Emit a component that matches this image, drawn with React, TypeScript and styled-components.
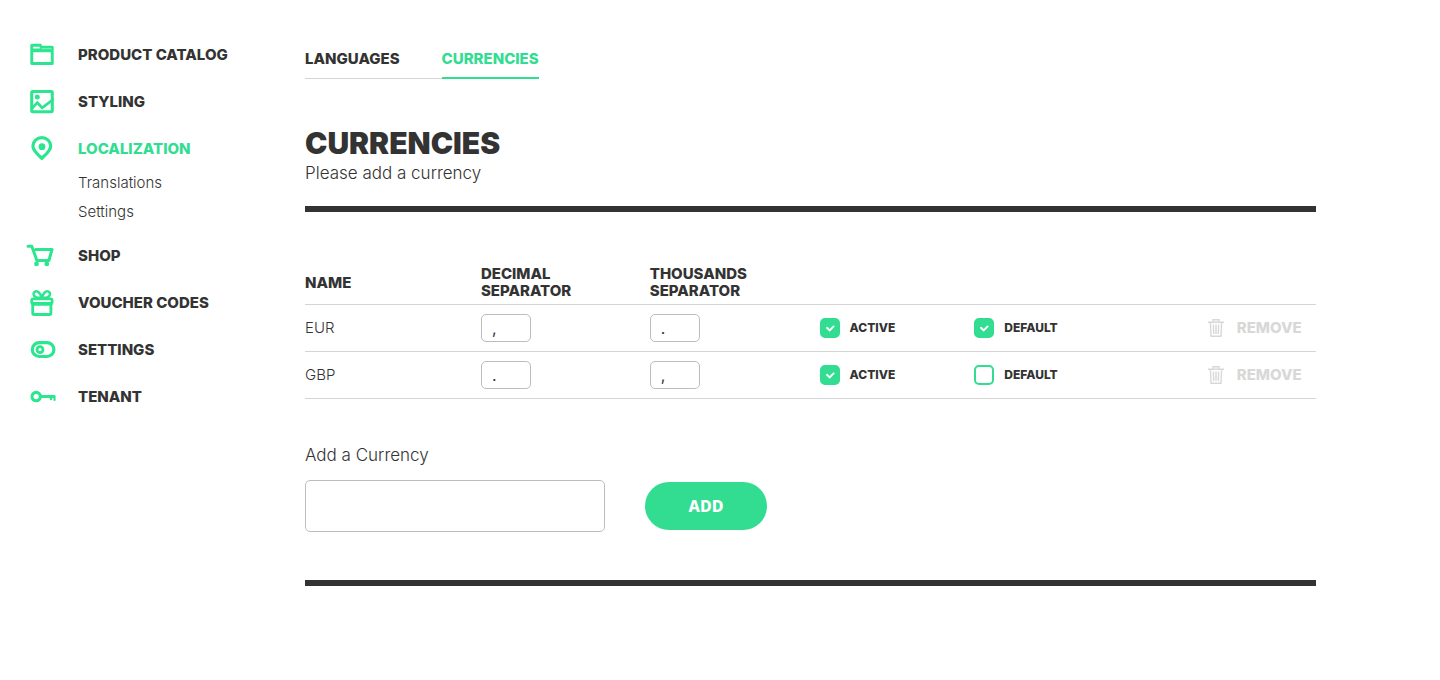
import React, { useState } from "react";
import styled, { createGlobalStyle, css } from "styled-components";

const color = {
  ink: "#333333",
  green: "#32dd92",
  icon: "#2ce68f",
  line: "#d5d5d5",
  field: "#bdbdbd",
  muted: "#d8d8d8",
};

const GlobalStyle = createGlobalStyle`
  * { box-sizing: border-box; }
  body {
    margin: 0;
    background: #fff;
    color: ${color.ink};
    font-family: Inter, "Liberation Sans", sans-serif;
    font-size: 15px;
  }
`;

const Page = styled.div`
  display: flex;
  align-items: flex-start;
`;

const Sidebar = styled.nav`
  flex: 0 0 305px;
  padding: 41px 20px 40px 26px;
`;

const Menu = styled.ul`
  display: flex;
  flex-direction: column;
  gap: 19px;
  margin: 0;
  padding: 0;
  list-style: none;
`;

const MenuLink = styled.a<{ $active?: boolean }>`
  display: flex;
  align-items: center;
  gap: 20px;
  height: 28px;
  color: ${(p) => (p.$active ? color.green : color.ink)};
  font-weight: 800;
  font-size: 15px;
  line-height: 20px;
  text-decoration: none;
  text-transform: uppercase;
  white-space: nowrap;
`;

const MenuIcon = styled.svg`
  flex: none;
  width: 32px;
  height: 28px;
  color: ${color.icon};
`;

const SubMenu = styled.ul`
  display: flex;
  flex-direction: column;
  gap: 9px;
  margin: 10px 0 0 52px;
  padding: 0 0 1px;
  list-style: none;
`;

const SubLink = styled.a`
  display: block;
  color: ${color.ink};
  font-weight: 300;
  font-size: 15px;
  line-height: 20px;
  text-decoration: none;
`;

const Main = styled.main`
  flex: 1;
  min-width: 0;
  margin-right: 124px;
  padding: 49px 0 60px;
`;

const Tabs = styled.nav`
  display: flex;
`;

const Tab = styled.a<{ $active?: boolean }>`
  padding: 0 42px 9px 0;
  border-bottom: 1px solid ${color.line};
  color: ${color.ink};
  font-weight: 800;
  font-size: 15px;
  line-height: 20px;
  text-decoration: none;
  text-transform: uppercase;
  ${(p) =>
    p.$active &&
    css`
      padding: 0 0 8px;
      border-bottom: 2px solid ${color.green};
      color: ${color.green};
    `}
`;

const Title = styled.h1`
  margin: 46px 0 0;
  font-weight: 900;
  font-size: 30px;
  line-height: 36px;
  text-transform: uppercase;
`;

const Intro = styled.p`
  margin: 0;
  font-weight: 300;
  font-size: 17px;
  line-height: 24px;
`;

const Rule = styled.hr<{ $space: number }>`
  height: 6px;
  margin: ${(p) => p.$space}px 0 0;
  border: 0;
  background: ${color.ink};
`;

const Table = styled.table`
  width: 100%;
  margin-top: 53px;
  border-spacing: 0;
  table-layout: fixed;
`;

const HeadCell = styled.th<{ $width: string }>`
  width: ${(p) => p.$width};
  padding: 0 0 5px;
  border-bottom: 1px solid ${color.line};
  font-weight: 800;
  font-size: 15px;
  line-height: 17px;
  text-align: left;
  text-transform: uppercase;
`;

const Cell = styled.td`
  height: 47px;
  padding: 0;
  border-bottom: 1px solid ${color.line};
  font-weight: 300;
  font-size: 15px;
  line-height: 20px;
`;

const SeparatorInput = styled.input`
  display: block;
  width: 50px;
  height: 28px;
  padding: 0 10px;
  border: 1px solid ${color.field};
  border-radius: 5px;
  background: #fff;
  color: ${color.ink};
  font: 400 16px Inter, sans-serif;
`;

const CheckLabel = styled.label`
  display: inline-flex;
  align-items: center;
  gap: 10px;
  font-weight: 800;
  font-size: 12px;
  text-transform: uppercase;
  vertical-align: middle;
`;

const CheckBox = styled.span`
  position: relative;
  display: block;
  width: 20px;
  height: 20px;
`;

const CheckInput = styled.input`
  display: block;
  width: 20px;
  height: 20px;
  margin: 0;
  appearance: none;
  border: 2px solid ${color.green};
  border-radius: 5px;
  &:checked {
    background: ${color.green};
  }
`;

const CheckMark = styled.svg`
  position: absolute;
  inset: 0;
  pointer-events: none;
`;

const RemoveButton = styled.button`
  display: flex;
  align-items: center;
  gap: 13px;
  padding: 0;
  border: 0;
  background: none;
  color: ${color.muted};
  font: 800 15px/20px Inter, sans-serif;
  text-transform: uppercase;
`;

const AddForm = styled.form`
  margin-top: 44px;
`;

const AddLabel = styled.label`
  display: block;
  font-weight: 300;
  font-size: 17px;
  line-height: 24px;
`;

const AddRow = styled.div`
  display: flex;
  align-items: center;
  gap: 40px;
  margin-top: 13px;
`;

const AddInput = styled.input`
  width: 300px;
  height: 52px;
  padding: 0 16px;
  border: 1px solid ${color.field};
  border-radius: 5px;
  background: #fff;
  color: ${color.ink};
  font: 400 16px Inter, sans-serif;
`;

const AddButton = styled.button`
  width: 122px;
  height: 48px;
  padding: 0;
  border: 0;
  border-radius: 24px;
  background: ${color.green};
  color: #fff;
  font: 800 16px "Noto Sans", sans-serif;
  text-transform: uppercase;
`;

const stroke = {
  fill: "none",
  stroke: "currentColor",
  strokeLinecap: "round" as const,
  strokeLinejoin: "round" as const,
};

const icons = {
  catalog: (
    <>
      <path
        fill="currentColor"
        fillRule="evenodd"
        d="M6 2.8h8.6a1.2 1.2 0 0 1 1.2 1.2v.8h10.4a1.5 1.5 0 0 1 1.5 1.5v16.2a1.6 1.6 0 0 1-1.6 1.6H6a1.7 1.7 0 0 1-1.7-1.7V4.5A1.7 1.7 0 0 1 6 2.8zM7.2 5.8v1.7h6.6V5.8zM7.2 11.2v9.9h17.6v-9.9z"
      />
      <path fill="#fff" fillOpacity=".35" d="M15.5 7h10v1.2h-10z" />
    </>
  ),
  styling: (
    <>
      <rect x="5.7" y="3.5" width="20.6" height="20.2" rx="1" {...stroke} strokeWidth="3" />
      <circle cx="11.3" cy="8.9" r="2.5" fill="currentColor" />
      <path d="M6 20.4l5.3-5.8 4.8 5.2L26.4 12" {...stroke} strokeWidth="2.8" />
    </>
  ),
  localization: (
    <>
      <path
        d="M15.8 23.3c-3-3-8.9-7.3-8.9-12.3a8.9 8.3 0 0 1 17.8 0c0 5-5.9 9.3-8.9 12.3z"
        {...stroke}
        strokeWidth="3.2"
      />
      <circle cx="16" cy="11.7" r="3.4" fill="currentColor" />
    </>
  ),
  shop: (
    <>
      <path d="M2 4.2h3.8l5.1 14.3h12L26 7.5H9.8" {...stroke} strokeWidth="3" />
      <circle cx="10.5" cy="21.9" r="2.4" fill="currentColor" />
      <circle cx="20.8" cy="21.9" r="2.4" fill="currentColor" />
    </>
  ),
  voucher: (
    <g {...stroke} strokeWidth="2.8">
      <rect x="5.7" y="9.8" width="20.4" height="4.6" rx="1.5" />
      <path d="M6.7 14.7v9.5a1.3 1.3 0 0 0 1.3 1.3h15.6a1.3 1.3 0 0 0 1.3-1.3v-9.5" />
      <path d="M7 15.3h18" />
      <path
        d="M15.8 8.6C11.5 9.6 8 8 7.6 5.2 7.4 3 9.6 1.7 11.6 2.6c2 1 3.3 3.4 4.2 6 .9-2.6 2.2-5 4.2-6 2-.9 4.2.4 4 2.6-.4 2.8-3.9 4.4-8.2 3.4z"
        strokeWidth="2.6"
      />
    </g>
  ),
  settings: (
    <>
      <rect x="6.3" y="6.6" width="21.6" height="13.9" rx="6.9" {...stroke} strokeWidth="3.2" />
      <circle cx="14" cy="13.6" r="3" {...stroke} strokeWidth="2.8" />
    </>
  ),
  tenant: (
    <>
      <circle cx="10.2" cy="13.6" r="4.2" {...stroke} strokeWidth="3.1" />
      <path
        fill="currentColor"
        d="M15 12h13.3a1.3 1.3 0 0 1 1.3 1.3V17a1.1 1.1 0 0 1-2.2 0v-2h-1.2v1a1.2 1.2 0 0 1-2.4 0v-1H15z"
      />
    </>
  ),
};

type IconName = keyof typeof icons;

const menu: { icon: IconName; label: string; children?: string[] }[] = [
  { icon: "catalog", label: "Product catalog" },
  { icon: "styling", label: "Styling" },
  { icon: "localization", label: "Localization", children: ["Translations", "Settings"] },
  { icon: "shop", label: "Shop" },
  { icon: "voucher", label: "Voucher codes" },
  { icon: "settings", label: "Settings" },
  { icon: "tenant", label: "Tenant" },
];

const currencies = [
  { name: "EUR", decimal: ",", thousands: ".", active: true, standard: true },
  { name: "GBP", decimal: ".", thousands: ",", active: true, standard: false },
];

const columns = [
  { label: "Name", width: "17.4%" },
  { label: <>Decimal<br />separator</>, width: "16.7%" },
  { label: <>Thousands<br />separator</>, width: "16.8%" },
  { label: "", width: "15.3%" },
  { label: "", width: "23.1%" },
  { label: "", width: "10.7%" },
];

function Check({ label, initial }: { label: string; initial: boolean }) {
  const [checked, setChecked] = useState(initial);
  return (
    <CheckLabel>
      <CheckBox>
        <CheckInput type="checkbox" checked={checked} onChange={(e) => setChecked(e.target.checked)} />
        {checked && (
          <CheckMark viewBox="0 0 20 20" aria-hidden="true">
            <path d="M7 9.8l2.7 2.6 3.9-4" fill="none" stroke="#fff" strokeWidth="1.9" strokeLinecap="round" />
          </CheckMark>
        )}
      </CheckBox>
      {label}
    </CheckLabel>
  );
}

function TrashIcon() {
  return (
    <svg width="16" height="18" viewBox="0 0 16 18" fill="none" stroke="currentColor" strokeWidth="1.4" aria-hidden="true">
      <path d="M0 3.2h16M5 3V.8h6V3M2.4 3.5l.6 13.7h10l.6-13.7M5.4 5.5l.3 9.5M8 5.5V15M10.6 5.5l-.3 9.5" />
    </svg>
  );
}

export default function App() {
  return (
    <>
      <GlobalStyle />
      <Page>
        <Sidebar aria-label="Main">
          <Menu>
            {menu.map((item) => (
              <li key={item.label}>
                <MenuLink href="#" $active={item.icon === "localization"}>
                  <MenuIcon viewBox="0 0 32 28" aria-hidden="true">
                    {icons[item.icon]}
                  </MenuIcon>
                  {item.label}
                </MenuLink>
                {item.children && (
                  <SubMenu>
                    {item.children.map((child) => (
                      <li key={child}>
                        <SubLink href="#">{child}</SubLink>
                      </li>
                    ))}
                  </SubMenu>
                )}
              </li>
            ))}
          </Menu>
        </Sidebar>
        <Main>
          <Tabs aria-label="Localization">
            <Tab href="#">Languages</Tab>
            <Tab href="#" $active>Currencies</Tab>
          </Tabs>
          <Title>Currencies</Title>
          <Intro>Please add a currency</Intro>
          <Rule $space={21} />
          <Table>
            <thead>
              <tr>
                {columns.map((column, i) => (
                  <HeadCell key={i} $width={column.width}>{column.label}</HeadCell>
                ))}
              </tr>
            </thead>
            <tbody>
              {currencies.map((c) => (
                <tr key={c.name}>
                  <Cell>{c.name}</Cell>
                  <Cell>
                    <SeparatorInput aria-label={`${c.name} decimal separator`} defaultValue={c.decimal} />
                  </Cell>
                  <Cell>
                    <SeparatorInput aria-label={`${c.name} thousands separator`} defaultValue={c.thousands} />
                  </Cell>
                  <Cell><Check label="Active" initial={c.active} /></Cell>
                  <Cell><Check label="Default" initial={c.standard} /></Cell>
                  <Cell>
                    <RemoveButton type="button"><TrashIcon />Remove</RemoveButton>
                  </Cell>
                </tr>
              ))}
            </tbody>
          </Table>
          <AddForm onSubmit={(e) => e.preventDefault()}>
            <AddLabel htmlFor="currency">Add a Currency</AddLabel>
            <AddRow>
              <AddInput id="currency" type="text" />
              <AddButton type="submit">Add</AddButton>
            </AddRow>
          </AddForm>
          <Rule $space={48} />
        </Main>
      </Page>
    </>
  );
}
